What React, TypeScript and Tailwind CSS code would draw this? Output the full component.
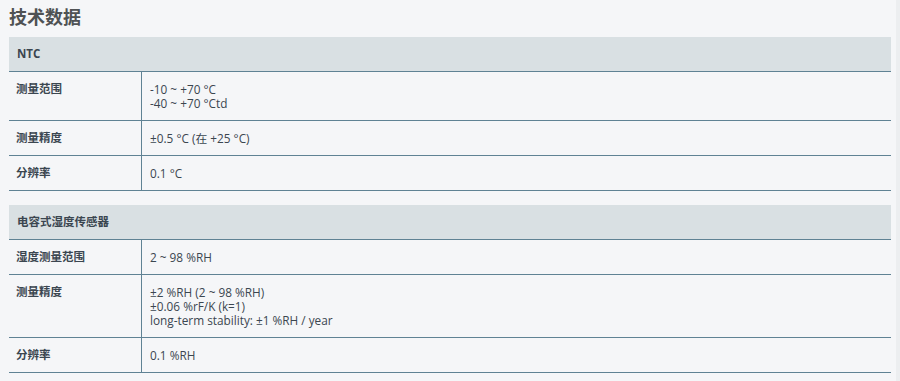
import React from "react";

type Row = { label: string; values: string[] };
type Section = { title: string; rows: Row[] };

const sections: Section[] = [
  {
    title: "NTC",
    rows: [
      { label: "测量范围", values: ["-10 ~ +70 °C", "-40 ~ +70 °Ctd"] },
      { label: "测量精度", values: ["±0.5 °C (在 +25 °C)"] },
      { label: "分辨率", values: ["0.1 °C"] },
    ],
  },
  {
    title: "电容式湿度传感器",
    rows: [
      { label: "湿度测量范围", values: ["2 ~ 98 %RH"] },
      {
        label: "测量精度",
        values: ["±2 %RH (2 ~ 98 %RH)", "±0.06 %rF/K (k=1)", "long-term stability: ±1 %RH / year"],
      },
      { label: "分辨率", values: ["0.1 %RH"] },
    ],
  },
];

const font = { fontFamily: '"Open Sans", "Noto Sans CJK SC", sans-serif' };

export default function App() {
  return (
    <div className="flex w-[900px] h-[381px] bg-[#f5f6f8] text-[#333333]" style={font}>
      <div className="flex-1 pl-[9px] pr-[5px] pt-[4px]">
        <h1 className="text-[18px] leading-[26px] font-bold text-[#4f5254]">技术数据</h1>
        <div className="mt-[7px] flex flex-col gap-[14px]">
          {sections.map((s) => (
            <div key={s.title} className="flex flex-col">
              <div className="h-[35px] bg-[#d9e0e3] border-b border-[#5f8294] flex items-center pl-[8px] text-[11.5px] font-bold text-[#3b4650]">
                {s.title}
              </div>
              {s.rows.map((r) => (
                <div key={r.label} className="grid grid-cols-[133px_1fr] border-b border-[#5f8294]">
                  <div className="border-r border-[#5f8294] pl-[7px] py-[10px] text-[11.5px] leading-[14px] font-bold text-[#3b4650]">
                    {r.label}
                  </div>
                  <div className="pl-[8px] py-[10px] text-[11.8px] leading-[14px] text-[#3b4650]">
                    {r.values.map((v) => (
                      <div key={v}>{v}</div>
                    ))}
                  </div>
                </div>
              ))}
            </div>
          ))}
        </div>
      </div>
      <div className="w-[4px] bg-[#eceef0]" />
    </div>
  );
}
